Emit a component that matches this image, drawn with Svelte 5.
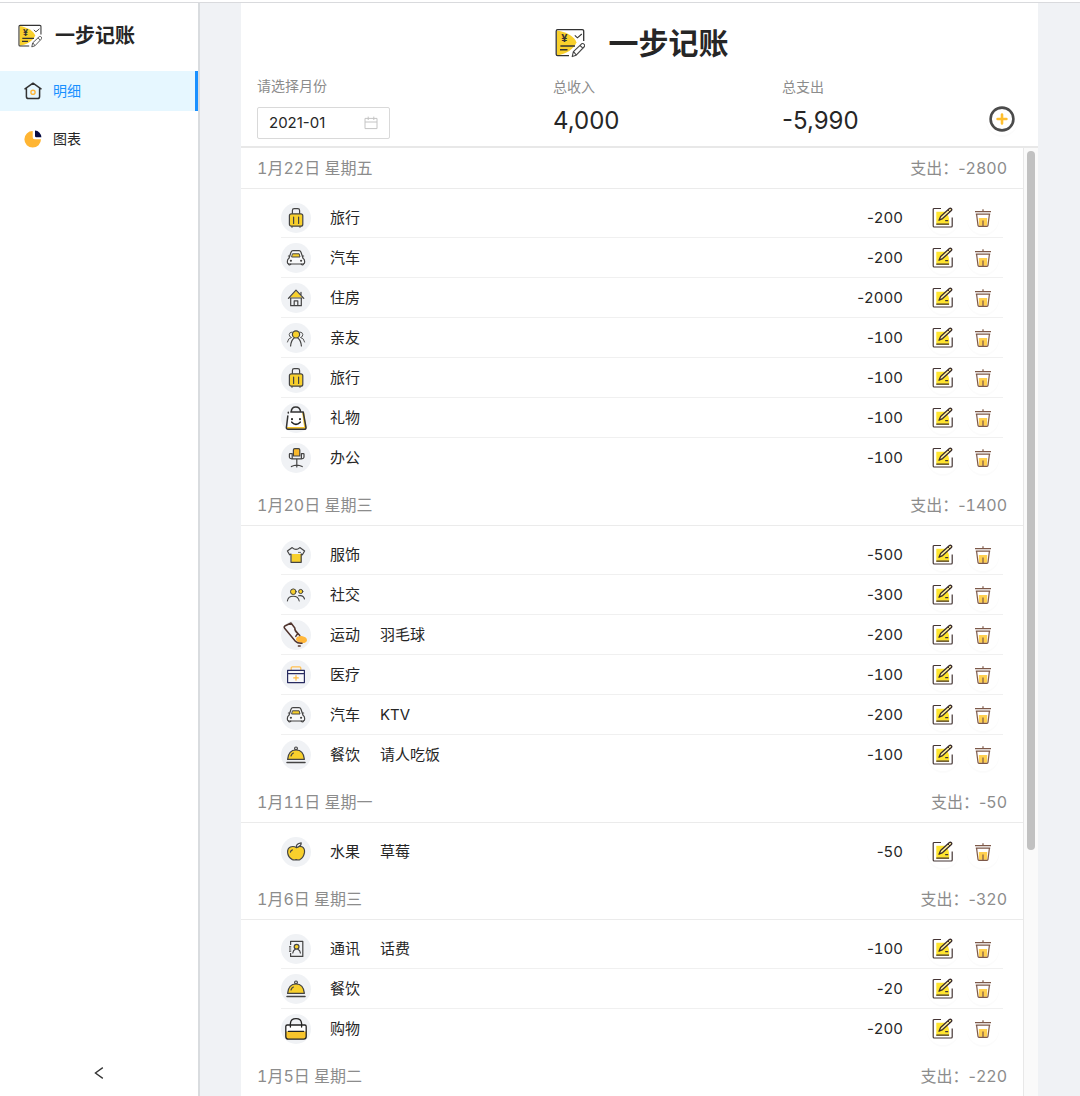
<script>
  const groups = [
    {
      date: '1月22日 星期五', total: -2800,
      items: [
        { icon: 'travel', name: '旅行', amount: -200 },
        { icon: 'car', name: '汽车', amount: -200 },
        { icon: 'house', name: '住房', amount: -2000 },
        { icon: 'friends', name: '亲友', amount: -100 },
        { icon: 'travel', name: '旅行', amount: -100 },
        { icon: 'gift', name: '礼物', amount: -100 },
        { icon: 'office', name: '办公', amount: -100 }
      ]
    },
    {
      date: '1月20日 星期三', total: -1400,
      items: [
        { icon: 'clothes', name: '服饰', amount: -500 },
        { icon: 'social', name: '社交', amount: -300 },
        { icon: 'sport', name: '运动', note: '羽毛球', amount: -200 },
        { icon: 'medical', name: '医疗', amount: -100 },
        { icon: 'car', name: '汽车', note: 'KTV', amount: -200 },
        { icon: 'food', name: '餐饮', note: '请人吃饭', amount: -100 }
      ]
    },
    {
      date: '1月11日 星期一', total: -50,
      items: [{ icon: 'fruit', name: '水果', note: '草莓', amount: -50 }]
    },
    {
      date: '1月6日 星期三', total: -320,
      items: [
        { icon: 'phone', name: '通讯', note: '话费', amount: -100 },
        { icon: 'food', name: '餐饮', amount: -20 },
        { icon: 'shopping', name: '购物', amount: -200 }
      ]
    },
    { date: '1月5日 星期二', total: -220, items: [] }
  ];
  let month = $state('2021-01');
</script>

{#snippet money(value)}{value < 0 ? '-' : ''}<span class="digits">{Math.abs(value)}</span>{/snippet}

{#snippet logo()}
  <svg class="logo" viewBox="0 0 30 30" aria-hidden="true">
    <path d="M2 2.5C12 4 20 9 21.5 14.5C19 21 11 26 2 27.5Z" fill="#f8d02c" />
    <path d="M28.7 13V3.2Q28.7 1.7 27.2 1.7H2.6Q1.2 1.7 1.2 3.2V26.2Q1.2 27.6 2.6 27.6H14" fill="none" stroke="#333" stroke-width="1.3" />
    <text x="9.3" y="14.4" text-anchor="middle">¥</text>
    <path d="M5.4 18H20M5 21.8H12.5" stroke="#333" stroke-width="1.6" />
    <path d="M19.8 7.4L22.4 9.8L26.8 6" fill="none" stroke="#333" stroke-width="1.1" />
    <path d="M17.2 28.6L18.4 23.6L26.6 15.8Q28 15 29.3 16.5Q30.2 17.8 29 19L21.2 27.2ZM18.6 23.6L21.2 27M25 17.3L27.8 20.2" fill="#fff" stroke="#444" stroke-width="1.1" stroke-linejoin="round" />
  </svg>
{/snippet}

{#snippet category(kind)}
  <svg class="category" viewBox="0 0 30 30" aria-hidden="true">
    <circle cx="15" cy="15" r="15" fill="#f0f2f5" />
    <g fill="none" stroke="#444" stroke-width="1.2" stroke-linecap="round" stroke-linejoin="round">
      {#if kind === 'travel'}
        <path d="M11.4 10.5V7.5Q11.4 5.7 13.2 5.7H16.8Q18.6 5.7 18.6 7.5V10.5M11 23.2V24.2M19 23.2V24.2" />
        <rect x="8.4" y="10.8" width="13.4" height="12.4" rx="2" fill="#f8d02c" />
        <path d="M12.6 14V20.4M17.6 14V20.4" />
      {:else if kind === 'car'}
        <path d="M8 15.2L10 9.2Q10.6 7.6 12 7.6H18Q19.4 7.6 20 9.2L22 15.2Q23.6 16.4 23.6 18V19.6Q23.6 21 22 21H8Q6.4 21 6.4 19.6V18Q6.4 16.4 8 15.2Z" fill="#fff" fill-opacity=".5" />
        <path d="M7.6 21.2Q8.3 22.8 9.8 21.2M20.2 21.2Q21.7 22.8 22.4 21.2M7.4 13H8.4M21.6 13H22.6" />
        <path d="M11.8 10.8H18.2L19 14H11Z" fill="#f8d02c" stroke-width="1" />
        <path d="M9.8 17.8H10M20 17.8H20.2" stroke-width="2" />
      {:else if kind === 'house'}
        <path d="M8.8 14.6L15 7.8L21.2 14.6Z" fill="#f8d02c" stroke="none" />
        <path d="M7.4 15.4L15 7.2L22.8 15.4M20 11.8V9.3M9.7 15.2V22.7H20.3V15.2M9.2 15H20.8M13.2 22.4V17.8H16.8V22.4" />
      {:else if kind === 'friends'}
        <circle cx="15" cy="11.4" r="3.6" fill="#f8d02c" />
        <path d="M9.6 23Q10.2 17 13 15.2M20.4 23Q19.8 17 17 15.2" />
        <path d="M11 9Q8.5 9 8.2 11.5Q8.2 14 10.5 14.5Q7 15.2 6.4 19M19 9Q21.5 9 21.8 11.5Q21.8 14 19.5 14.5Q23 15.2 23.6 19" stroke-width=".9" />
      {:else if kind === 'gift'}
        <path d="M9 9H21.8L24.5 24.5H6.5Z" fill="#fff" stroke="none" />
        <path d="M22.2 10L24.2 24.8L6.4 25" stroke="#f8c52c" stroke-width="2" />
        <path d="M10.2 9Q10.4 4 14.8 4Q19.2 4 19.6 9M9.8 9H22.2L25 24.4Q25 26.3 23.4 26.3H7Q5.3 26.3 5.4 24.5L6.8 13M7.3 9.2V10" stroke-width="1.5" stroke="#333" />
        <path d="M11 16V16.2M19 16V16.2" stroke-width="2" stroke="#222" />
        <path d="M10.8 19.2Q15 23.6 19.2 19.2" stroke-width="1.6" stroke="#222" />
      {:else if kind === 'office'}
        <path d="M12.4 13V7Q12.4 5.6 13.8 5.6H17.4Q18.8 5.6 18.8 7V13Z" fill="#f8b82c" />
        <path d="M11 10.6H9Q8.4 10.6 8.4 11.3V14.2Q8.6 15.8 10.8 15.8M20.4 10.6H22.4Q23 10.6 23 11.3V14.2Q22.8 15.8 20.6 15.8M11.2 10.6V15.8H20.4V10.6M15.8 15.8V24M10.4 23.6Q15.8 20.6 21.2 23.6" />
      {:else if kind === 'clothes'}
        <path d="M10.4 14H20.4V22.3H10.4Z" fill="#f8d02c" stroke="none" />
        <path d="M11.2 7.6Q15 11 18.8 7.6L23.6 11L21.4 14.8L20.2 14V22.3H10V14L8.6 14.8L6.4 11Z" />
        <path d="M17.4 12.4H19.6" stroke-width=".8" />
      {:else if kind === 'social'}
        <circle cx="12.3" cy="11.7" r="2.8" fill="#f8d02c" stroke-width="1" />
        <circle cx="19.7" cy="11.5" r="2.1" fill="#f8d02c" stroke-width="1" />
        <path d="M6.4 21Q7 16.2 12.2 16.2Q17.4 16.2 18.2 21M17.6 15.8Q22.4 14.8 23.5 19" stroke-width="1.1" />
      {:else if kind === 'sport'}
        <g stroke="#51352e" stroke-width="1.5">
          <path d="M10 3L3 7.2L14.6 21L16.8 13.4L13.8 8Z" fill="#f7f7f9" stroke="none" />
          <path d="M15 20Q14.6 15.8 20.8 16Q26 17 26 20.2Q25.6 23 21.6 23Q17 23 15 20Z" fill="#ffb73b" stroke="none" />
          <path d="M10 3L3.8 6Q2.6 7 3.6 8.2L14.4 21.2Q16.6 23.6 21 23.2M10 3L13.8 8Q13.6 11 16.8 13.4L14.8 16.4M17 13.4L18.8 15.4M17.4 26H19.2" />
        </g>
      {:else if kind === 'medical'}
        <path d="M10.2 10V8Q10.2 6.8 11.4 6.8H18.6Q19.8 6.8 19.8 8V10" stroke="#ffc052" />
        <path d="M6.6 10.4H23.4V22.6H6.6ZM6.6 13.6H23.4" stroke="#272b60" fill="#fff" fill-opacity=".5" />
        <path d="M15 15.6V20.2M12.7 17.9H17.3" stroke="#ffb73b" />
      {:else if kind === 'food'}
        <circle cx="15" cy="8.4" r="1.4" />
        <path d="M6.6 19.4Q7.4 10 15 10Q22.6 10 23.4 19.4Z" fill="#f8d02c" />
        <path d="M6 22.4H24" stroke-width="1.5" />
        <path d="M10 16Q10.6 13.8 12.4 13" />
      {:else if kind === 'fruit'}
        <path d="M15.4 10.6Q18 8.6 21 9.8Q24 11.4 23.5 15.4Q22.6 20.6 19 22.6Q17.2 23.4 15.2 22.6Q13.2 23.4 11.4 22.6Q7 20.4 6.6 15.4Q6.4 11.4 9.4 10Q12.4 8.8 15.4 10.6Z" fill="#f8d02c" />
        <path d="M15.4 10.6Q14.6 6.8 20.2 5.8Q20.4 9.4 15.4 10.6Z" fill="#fff" />
        <path d="M9.4 15.2Q9.8 13.2 11.4 12.8" />
      {:else if kind === 'phone'}
        <path d="M9.6 11V7.4H21.8V22.4H9.6V19M8 12.8H10.2M8 15H10.2M8 17.2H10.2" stroke-linecap="butt" />
        <circle cx="15.6" cy="12.8" r="2.4" fill="#f8d02c" />
        <path d="M11.8 19Q12.2 16.2 14.2 15.4M19.4 19Q19 16.2 17 15.4" />
      {:else if kind === 'shopping'}
        <path d="M4.8 11H25.2V17.4H4.8Z" fill="#fff" stroke="none" />
        <path d="M4.8 17.4H25.2V23Q25.2 25 23.2 25H6.8Q4.8 25 4.8 23Z" fill="#f8c52c" stroke="none" />
        <path d="M4.8 12.4Q4.8 11 6.2 11H23.8Q25.2 11 25.2 12.4V22.6Q25.2 25.2 22.6 25.2H7.4Q4.8 25.2 4.8 22.6ZM9.4 13V9.4Q9.8 4.6 15 4.6Q20.2 4.6 20.6 9.4V13M7.4 17.4H22.6" stroke="#222" stroke-width="1.3" />
      {/if}
    </g>
  </svg>
{/snippet}

<div class="app">
  <aside>
    <div class="brand">{@render logo()}<span>一步记账</span></div>
    <nav>
      <a href="#detail" class="active" aria-current="page">
        <svg viewBox="0 0 18 18" aria-hidden="true">
          <path d="M1 6.8L9 1.2L17 6.8M2.4 6V14.4Q2.4 16.6 4.6 16.6H13.4Q15.6 16.6 15.6 14.4V6" fill="none" stroke="#333" stroke-width="1.5" stroke-linecap="round" stroke-linejoin="round" />
          <circle cx="9" cy="10.3" r="2.1" fill="none" stroke="#ffb73b" stroke-width="1.4" />
        </svg>
        明细
      </a>
      <a href="#chart">
        <svg viewBox="0 0 18 18" aria-hidden="true">
          <path d="M8.7 1A8.3 8.3 0 1 0 17 9.3H10.7Q8.7 9.3 8.7 7.3Z" fill="#ffb533" />
          <path d="M11 .6A6.8 6.8 0 0 1 17.4 7.3H12.2Q11 7.3 11 6.1Z" fill="#070b42" />
        </svg>
        图表
      </a>
    </nav>
    <button class="collapse" aria-label="收起菜单">
      <svg viewBox="0 0 14 14" aria-hidden="true"><path d="M10.8 1.6L3.4 7L10.8 12.4" fill="none" stroke="#333" stroke-width="1.3" /></svg>
    </button>
  </aside>

  <main>
    <section class="panel">
      <header>
        <h1>{@render logo()}<span>一步记账</span></h1>
        <div class="summary">
          <div class="field">
            <label for="month">请选择月份</label>
            <div class="picker">
              <input id="month" type="text" bind:value={month} />
              <svg viewBox="0 0 14 14" aria-hidden="true"><path d="M1 2.4H13V12.6H1ZM1 6H13M4.2 .6V4M9.8 .6V4" fill="none" stroke="#c4c4c4" /></svg>
            </div>
          </div>
          <div class="stat"><span>总收入</span><strong>4,000</strong></div>
          <div class="stat"><span>总支出</span><strong>-5,990</strong></div>
          <button class="round add" aria-label="添加">
            <svg viewBox="0 0 26 26" aria-hidden="true">
              <circle cx="13" cy="13" r="11.4" fill="none" stroke="#4b4b4b" stroke-width="2.6" />
              <path d="M13 8.6V17.4M8.6 13H17.4" stroke="#ffbf2f" stroke-width="2.6" stroke-linecap="round" />
            </svg>
          </button>
        </div>
      </header>

      <div class="body">
        <div class="list">
          {#each groups as group}
            <section class="group">
              <h2><span class="digits">{group.date}</span><span>支出：{@render money(group.total)}</span></h2>
              <ul>
                {#each group.items as item}
                  <li>
                    {@render category(item.icon)}
                    <span class="name">{item.name}</span>
                    <span class="note">{item.note ?? ''}</span>
                    <span class="amount">{@render money(item.amount)}</span>
                    <button class="round" aria-label="编辑">
                      <svg class="edit" viewBox="0 0 22 22" aria-hidden="true">
                        <path d="M4.3 4.7H13Q17.2 8 17.2 14V18H4.3Z" fill="#ffe52e" />
                        <path d="M9 1.5H2.2Q1.2 1.5 1.2 2.5V19Q1.2 20 2.2 20H19.2Q20.2 20 20.2 19V10.6M4.3 17.2H17M13.2 13.6H16.2" fill="none" stroke="#443534" stroke-width="1.2" />
                        <path d="M7 13.2L8.6 9.6L17.4 1.6Q18.4.8 19.4 1.7Q20.2 2.6 19.4 3.6L10.6 11.6Z" fill="#fff3a0" stroke="#3a2b2a" stroke-width="1.3" stroke-linejoin="round" />
                        <path d="M16 3L18 5" stroke="#3a2b2a" />
                      </svg>
                    </button>
                    <button class="round" aria-label="删除">
                      <svg class="trash" viewBox="0 0 18 18" aria-hidden="true">
                        <path d="M4.8 9H13.2V16.8H4.8Z" fill="#ffd04f" />
                        <path d="M9 .3V2.4M1 2.7H17M1.8 5.2H16.2M2.6 5.4L4 16.4Q4.1 17.3 5 17.3H13Q13.9 17.3 14 16.4L15.4 5.4M9 11.4V17" fill="none" stroke="#7d5848" stroke-width="1.2" />
                      </svg>
                    </button>
                  </li>
                {/each}
              </ul>
            </section>
          {/each}
        </div>
        <div class="track" aria-hidden="true"><div class="thumb"></div></div>
      </div>
    </section>
  </main>
</div>

<style>
  :global(body) { margin: 0; }
  .app {
    box-sizing: border-box;
    display: flex;
    height: 100vh;
    padding-top: 2px;
    color: #262626;
    font: 14px/22px Inter, "Noto Sans CJK SC", sans-serif;
    background: #fff;
  }
  button { padding: 0; border: 0; background: none; cursor: pointer; }
  svg { display: block; flex: none; }
  .digits { font-variant-numeric: tabular-nums; }
  aside {
    box-sizing: border-box;
    display: flex;
    flex-direction: column;
    flex: none;
    width: 200px;
    border-top: 1px solid #d9dadd;
    border-right: 2px solid #d9dcdf;
  }
  .brand { display: flex; align-items: center; gap: 13px; height: 66px; padding-left: 18px; font-size: 20px; font-weight: 600; }
  .logo { width: 24px; height: 24px; }
  .logo text { fill: #333; font: 700 11px Inter, sans-serif; }
  nav { display: flex; flex-direction: column; gap: 8px; padding-top: 2px; }
  nav a {
    display: flex;
    align-items: center;
    gap: 11px;
    height: 40px;
    padding-left: 24px;
    color: #262626;
    text-decoration: none;
  }
  nav a svg { width: 18px; height: 18px; }
  nav .active { color: #1890ff; background: #e6f7ff; border-right: 3px solid #1890ff; }
  .collapse { display: flex; justify-content: center; align-items: center; height: 46px; margin-top: auto; }
  .collapse svg { width: 14px; height: 14px; }
  main { box-sizing: border-box; flex: 1; min-width: 0; padding: 0 42px 0 41px; background: #f0f2f5; border-top: 1px solid #d9dadd; }
  .panel { display: flex; flex-direction: column; height: 100%; background: #fff; }
  header { padding: 16px 16px 7px; border-bottom: 2px solid #e8e8e8; }
  h1 { display: flex; justify-content: center; align-items: center; gap: 24px; height: 48px; margin: 0; padding-left: 4px; font-size: 30px; font-weight: 600; }
  h1 .logo { width: 30px; height: 30px; }
  .summary { display: grid; grid-template-columns: 296fr 229fr 204fr auto; align-items: end; padding: 8px 4px 0 0; }
  .field label, .stat span { display: block; color: #8c8c8c; }
  .picker {
    box-sizing: border-box;
    display: flex;
    align-items: center;
    width: 133px;
    height: 32px;
    margin-top: 10px;
    padding: 0 11px;
    border: 1px solid #d9d9d9;
    border-radius: 2px;
  }
  .picker input { flex: 1; min-width: 0; padding: 0; border: 0; outline: 0; color: #262626; background: none; font: inherit; font-size: 15px; }
  .picker svg { width: 14px; height: 14px; }
  .stat strong { display: block; margin-top: 5px; font-size: 24px; font-weight: 400; line-height: 36px; }
  .round {
    display: flex;
    flex: none;
    justify-content: center;
    align-items: center;
    width: 32px;
    height: 32px;
    border-radius: 50%;
    box-shadow: 0 2px 0 rgba(0, 0, 0, 0.015);
  }
  .add { margin-bottom: 4px; }
  .add svg { width: 26px; height: 26px; }
  .body { display: flex; flex: 1; min-height: 0; }
  .list { flex: 1; min-width: 0; overflow-y: auto; scrollbar-width: none; }
  h2 {
    display: flex;
    justify-content: space-between;
    height: 40px;
    margin: 0;
    padding: 0 16px;
    border-bottom: 1px solid #ebebeb;
    color: #8c8c8c;
    font-size: 16px;
    font-weight: 400;
    line-height: 40px;
  }
  ul { margin: 0; padding: 9px 20px 7px 40px; list-style: none; }
  li { box-sizing: border-box; display: flex; align-items: center; height: 40px; padding-right: 4px; border-bottom: 1px solid #f0f0f0; font-size: 15px; }
  li:last-child { border-bottom-color: transparent; }
  .category { width: 30px; height: 30px; }
  .name { margin-left: 19px; }
  .note { flex: 1; margin-left: 20px; }
  .amount { margin-right: 24px; }
  li .round + .round { margin-left: 8px; }
  .edit { width: 22px; height: 22px; }
  .trash { width: 18px; height: 18px; }
  .track { box-sizing: border-box; flex: none; width: 15px; padding: 3px 3px 0; border-left: 1px solid #e8e8e8; background: #fafafa; }
  .thumb { width: 8px; height: 74%; border-radius: 4px; background: #c1c1c1; }
</style>
